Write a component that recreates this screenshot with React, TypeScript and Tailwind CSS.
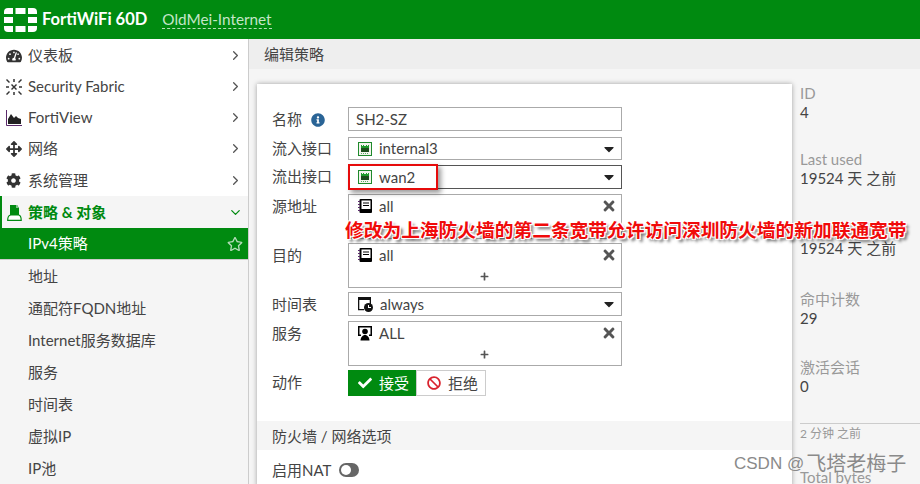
import { FaTachometerAlt, FaArrowsAlt, FaCog, FaInfoCircle, FaCheck, FaBan, FaTimes, FaPlus, FaRegStar, FaCaretDown } from "react-icons/fa";
import { FiChevronRight, FiChevronDown } from "react-icons/fi";

const font = "font-['Lato','Noto_Sans_CJK_SC',sans-serif]";

function Logo() {
  return (
    <svg width="33" height="24" viewBox="0 0 33 24" className="shrink-0">
      <g fill="#fff">
        <path d="M0 6V4a4 4 0 0 1 4-4h5v6z" />
        <rect x="11.500" y="0" width="10" height="6" />
        <path d="M24 0h5a4 4 0 0 1 4 4v2h-9z" />
        <rect x="0" y="9" width="9" height="6" />
        <rect x="24" y="9" width="9" height="6" />
        <path d="M0 18h9v6H4a4 4 0 0 1-4-4z" />
        <rect x="11.500" y="18" width="10" height="6" />
        <path d="M24 18h9v2a4 4 0 0 1-4 4h-5z" />
      </g>
    </svg>
  );
}

function FabricIcon() {
  return (
    <svg width="16" height="16" viewBox="0 0 16 16" fill="#333">
      <path d="M0 1l1-1 3 3-1 1zM15 0l1 1-3 3-1-1zM0 15l3-3 1 1-3 3zM12 13l1-1 3 3-1 1z" />
      <path d="M7 0h2v3H7zM0 7h3v2H0zM13 7h3v2h-3zM7 13h2v3H7z" opacity=".75" />
      <path d="M5 6l1-1 5 5-1 1zM10 5l1 1-5 5-1-1z" />
    </svg>
  );
}

function FortiViewIcon() {
  return (
    <svg width="16" height="16" viewBox="0 0 16 16" className="shrink-0">
      <path d="M0.500 0v15.500H16" fill="none" stroke="#5a2a6a" strokeWidth="1" />
      <path d="M2 14V9l3-5 3 4 2-2 2 2 3 1v5z" fill="#222" />
    </svg>
  );
}

function PolicyIcon() {
  return (
    <svg width="15" height="16" viewBox="0 0 15 16" className="shrink-0">
      <path d="M3 0h7l2 3v7H3z" fill="#008a10" />
      <path d="M9 0h1l2 3H9z" fill="#7fc48a" />
      <path d="M0.700 15.300c0-3 1-5 3-5.300h8c1.500.3 2.500 2.300 2.500 5.300z" fill="#fff" stroke="#008a10" strokeWidth="1.200" />
    </svg>
  );
}

function PortIcon() {
  return (
    <svg width="14" height="14" viewBox="0 0 14 14" className="shrink-0">
      <rect x="0.500" y="0.500" width="13" height="13" fill="#f4f4ee" stroke="#1f8a2c" />
      <path d="M3 3h1v1h1V3h1v1h2V3h1v1h1V3h1v3H3z" fill="#1f9a2c" />
      <path d="M3 6h8v4H3z" fill="#1c4d1c" />
      <path d="M3 11h1v1H3zM5 11h1v1H5zM7 11h1v1H7zM9 11h1v1H9z" fill="#5aa765" />
    </svg>
  );
}

function AddressIcon() {
  return (
    <svg width="14" height="14" viewBox="0 0 14 14" className="shrink-0">
      <rect x="1.500" y="0" width="12.500" height="14" rx="1" fill="#000" />
      <rect x="3.500" y="1.500" width="9" height="8.500" fill="#fff" />
      <path d="M5 3.500h6v1H5zM5 6h6v1H5z" fill="#000" />
      <path d="M0 2h2v1H0zM0 5h2v1H0zM0 8h2v1H0zM0 11h2v1H0z" fill="#5a2a6a" />
    </svg>
  );
}

function ScheduleIcon() {
  return (
    <svg width="15" height="15" viewBox="0 0 15 15" className="shrink-0">
      <path d="M0 0h13v7h-1.300V3H1.300v9H6v1.300H0z" fill="#111" />
      <circle cx="10.500" cy="10.500" r="4.500" fill="#111" />
      <path d="M10 8h1v3h-1zM10 10h3v1h-3z" fill="#fff" />
    </svg>
  );
}

function ServiceIcon() {
  return (
    <svg width="14" height="15" viewBox="0 0 14 15" className="shrink-0">
      <path d="M0 0h14v10h-3V8.500h1.500v-7h-11v7H3V10H0z" fill="#000" />
      <circle cx="7" cy="5.500" r="2.800" fill="#000" />
      <path d="M2.500 14.500c0-3 2-5.500 4.500-5.500s4.500 2.500 4.500 5.500z" fill="#000" />
    </svg>
  );
}

function NavRow({ icon, label, open, tall }: { icon: React.ReactNode; label: string; open?: boolean; tall?: boolean }) {
  return (
    <div className={`flex items-center pr-[5px] text-[15px] ${open ? "h-8 border-l-2 border-[#008a10] bg-[#f5f5f5] pt-px pl-[5px] text-[#008a10]" : "pl-[6px] text-[#444]"} ${!open && tall ? "h-8" : ""} ${!open && !tall ? "h-[31px]" : ""}`}>
      <span className={`flex shrink-0 items-center ${open ? "w-[21px]" : "w-[22px]"}`}>{icon}</span>
      <span className={`flex-1 ${open ? "font-bold" : ""}`}>{label}</span>
      {open ? <FiChevronDown size={15} /> : <FiChevronRight size={15} className="text-[#555]" />}
    </div>
  );
}

function SubRow({ label }: { label: string }) {
  return <div className="flex h-8 items-center pl-7 text-[15px] text-[#444]">{label}</div>;
}

function Row({ label, className, high, children }: { label: React.ReactNode; className?: string; high?: boolean; children: React.ReactNode }) {
  return (
    <div className={`flex items-start ${className ?? ""}`}>
      <div className={`flex h-[23px] w-[76px] shrink-0 items-center gap-[9px] text-[15px] text-[#444] ${high ? "" : "pt-[2px]"}`}>{label}</div>
      {children}
    </div>
  );
}

function SelectBox({ icon, value, dark, tall }: { icon: React.ReactNode; value: string; dark?: boolean; tall?: boolean }) {
  return (
    <div className={`flex w-[274px] items-center border bg-white pr-[4px] pl-[9px] ${tall ? "h-6" : "h-[23px]"} ${dark ? "border-[#555]" : "border-[#aaa]"}`}>
      {icon}
      <span className="ml-[7px] flex-1 text-[15px] text-[#444]">{value}</span>
      <FaCaretDown size={16} className="text-[#222]" />
    </div>
  );
}

function MultiBox({ icon, value }: { icon: React.ReactNode; value: string }) {
  return (
    <div className="flex h-[45px] w-[274px] flex-col border border-[#aaa] bg-white pr-[4px] pl-[9px]">
      <div className="flex h-[22px] shrink-0 items-center">
        {icon}
        <span className="ml-[7px] flex-1 text-[15px] text-[#444]">{value}</span>
        <FaTimes size={16} className="text-[#555]" />
      </div>
      <div className="flex h-[20px] items-center justify-center pr-[7px]">
        <FaPlus size={9} className="text-[#555]" />
      </div>
    </div>
  );
}

function Stat({ label, value, className }: { label?: string; value: string; className?: string }) {
  return (
    <div className={`flex flex-col text-[15px] leading-[19px] ${className ?? ""}`}>
      {label && <span className="text-[#999]">{label}</span>}
      <span className="text-[#444]">{value}</span>
    </div>
  );
}

export default function App() {
  return (
    <div className={`${font} relative flex h-[484px] w-[920px] flex-col overflow-hidden bg-[#f5f5f5]`}>
      <header className="flex h-[39px] shrink-0 items-center bg-[#008a10] pl-1">
        <Logo />
        <span className="ml-[5px] text-[16.500px] font-bold text-white">FortiWiFi 60D</span>
        <span className="ml-[15px] border-b border-dashed border-[#b5dcb9] text-[15.300px] leading-[18px] text-[#c5e6c8]">OldMei-Internet</span>
      </header>

      <div className="flex min-h-0 flex-1">
        <aside className="w-[249px] shrink-0 border-r border-[#ccc] bg-white pt-px">
          <NavRow icon={<FaTachometerAlt size={16} className="text-[#333]" />} label="仪表板" />
          <NavRow icon={<FabricIcon />} label="Security Fabric" />
          <NavRow icon={<FortiViewIcon />} label="FortiView" />
          <NavRow icon={<FaArrowsAlt size={16} className="text-[#333]" />} label="网络" />
          <NavRow tall icon={<FaCog size={15} className="text-[#333]" />} label="系统管理" />
          <NavRow open icon={<PolicyIcon />} label="策略 & 对象" />
          <div className="flex h-8 items-center justify-between border-b border-[#ccc] bg-[#008a10] pr-[5px] pl-7 text-[15px] text-white">
            IPv4策略
            <FaRegStar size={16} className="text-[#b5dcb9]" />
          </div>
          <div className="bg-[#f5f5f5]">
            <SubRow label="地址" />
            <SubRow label="通配符FQDN地址" />
            <SubRow label="Internet服务数据库" />
            <SubRow label="服务" />
            <SubRow label="时间表" />
            <SubRow label="虚拟IP" />
            <SubRow label="IP池" />
          </div>
        </aside>

        <main className="flex min-w-0 flex-1 flex-col">
          <div className="flex h-[30px] shrink-0 items-center bg-[#eee] pl-[15px] text-[15px] text-[#444]">编辑策略</div>
          <div className="flex flex-1 pt-[15px] pl-2">
            <section className="w-[535px] shrink-0 bg-white pt-[23px] shadow-[0_0_5px_rgba(0,0,0,0.35)]">
              <div className="flex flex-col pl-[15px]">
                <Row
                  label={
                    <>
                      名称 <FaInfoCircle size={14} className="text-[#2a6496]" />
                    </>
                  }
                >
                  <div className="flex h-6 w-[274px] items-center border border-[#aaa] pl-[7px] text-[15px] text-[#444]">SH2-SZ</div>
                </Row>
                <Row high label="流入接口" className="mt-[6px]">
                  <SelectBox icon={<PortIcon />} value="internal3" />
                </Row>
                <Row high label="流出接口" className="mt-[5px]">
                  <SelectBox tall dark icon={<PortIcon />} value="wan2" />
                </Row>
                <Row label="源地址" className="mt-[5px]">
                  <MultiBox icon={<AddressIcon />} value="all" />
                </Row>
                <Row label="目的" className="mt-1">
                  <MultiBox icon={<AddressIcon />} value="all" />
                </Row>
                <Row label="时间表" className="mt-1">
                  <SelectBox tall icon={<ScheduleIcon />} value="always" />
                </Row>
                <Row label="服务" className="mt-[5px]">
                  <MultiBox icon={<ServiceIcon />} value="ALL" />
                </Row>
                <Row label="动作" className="mt-1">
                  <div className="flex h-[26px] text-[15px]">
                    <div className="flex w-[68px] items-center gap-[7px] bg-[#008a10] pl-[10px] text-white">
                      <FaCheck size={14} />
                      接受
                    </div>
                    <div className="flex w-[70px] items-center gap-[7px] border border-[#ccc] pl-[10px] text-[#444]">
                      <FaBan size={14} className="text-[#d9232e]" />
                      拒绝
                    </div>
                  </div>
                </Row>
              </div>
              <div className="mt-[25px] flex h-[29px] items-center bg-[#f5f5f5] pt-[2px] pl-[15px] text-[15px] text-[#444]">防火墙 / 网络选项</div>
              <div className="flex items-center gap-2 pt-[9px] pl-[15px] text-[15px] leading-[22px] text-[#444]">
                启用NAT
                <div className="flex h-[14px] w-5 rounded-full bg-[#666] p-[2px]">
                  <div className="h-[10px] w-[10px] rounded-full bg-white" />
                </div>
              </div>
            </section>
            <aside className="flex flex-1 flex-col pl-2">
              <Stat label="ID" value="4" />
              <Stat label="Last used" value="19524 天 之前" className="mt-[28px]" />
              <Stat value="19524 天 之前" className="mt-[51px]" />
              <Stat label="命中计数" value="29" className="mt-[32px]" />
              <Stat label="激活会话" value="0" className="mt-[30px]" />
              <div className="mt-[27px] w-[120px] border-t border-[#ccc] pt-[1px] text-[12px] leading-[18px] text-[#999]">2 分钟 之前</div>
              <span className="mt-[25px] text-[15px] leading-[19px] text-[#999]">Total bytes</span>
            </aside>
          </div>
        </main>
      </div>

      <div className="absolute top-[164px] left-[348px] h-[26px] w-[90px] border-2 border-[#e60b0b] shadow-[3px_3px_5px_rgba(0,0,0,0.4)]" />
      <div className="absolute top-[217px] left-[345px] font-['Noto_Sans_CJK_SC',sans-serif] text-[18.730px] leading-[24px] font-bold whitespace-nowrap text-[#f00a0a] [text-shadow:-1px_-1px_0_#fff,1px_-1px_0_#fff,-1px_1px_0_#fff,1px_1px_0_#fff,3px_3px_3px_rgba(0,0,0,0.6)]">
        修改为上海防火墙的第二条宽带允许访问深圳防火墙的新加联通宽带
      </div>
      <div className="absolute top-[452px] left-[734px] flex items-center font-['Liberation_Sans','Noto_Sans_CJK_SC',sans-serif] text-[17px] leading-[24px] whitespace-nowrap text-[#8a8a8a]">
        CSDN @<span className="ml-[2px] text-[20px]">飞塔老梅子</span>
      </div>
    </div>
  );
}
